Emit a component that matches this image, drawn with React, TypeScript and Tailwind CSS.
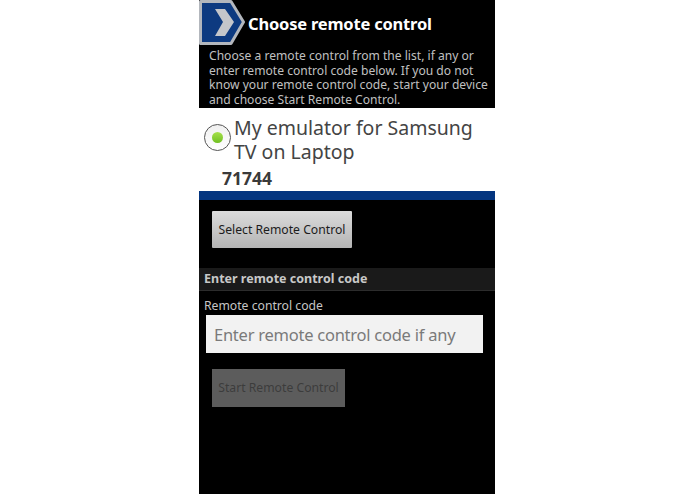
const FONT = "font-['Noto_Sans','Open_Sans',sans-serif]";

function Logo() {
  return (
    <svg width="46" height="45" viewBox="0 0 46 45" className="shrink-0">
      <path d="M1.5 1.5H32L44.5 22L32 43.5H1.5Z" fill="#0d3a80" stroke="#b3b7bd" strokeWidth="3" strokeLinejoin="round" />
      <path d="M16 9H26L35 22L26 36H16L24 22Z" fill="#c4c6ca" />
    </svg>
  );
}

export default function App() {
  return (
    <div className={`bg-white h-[494px] overflow-hidden pl-[199px] ${FONT}`}>
      <div className="w-[296px] h-full bg-black flex flex-col">
        {/* Header */}
        <div className="flex items-start h-[49px]">
          <Logo />
          <h1 className="ml-[3px] mt-[11px] text-[16.5px] leading-[26px] font-bold text-white tracking-[-0.2px] whitespace-nowrap">
            Choose remote control
          </h1>
        </div>
        <p className="h-[59px] pl-[10px] text-[12.1px] leading-[14.5px] text-[#c0c0c0] whitespace-nowrap">
          Choose a remote control from the list, if any or
          <br />
          enter remote control code below. If you do not
          <br />
          know your remote control code, start your device
          <br />
          and choose Start Remote Control.
        </p>

        {/* Remote list */}
        <div className="h-[83px] bg-white flex flex-col">
          <div className="flex items-start">
            <div className="ml-[5px] mt-[16px] w-[27px] h-[27px] rounded-full border border-[#555] bg-gradient-to-b from-[#f0f0f0] to-white flex items-center justify-center shrink-0">
              <div className="w-[11px] h-[11px] rounded-full bg-gradient-to-b from-[#a6e04a] to-[#6fc020]" />
            </div>
            <div className="ml-[3px] mt-[8px] text-[19.5px] leading-[24px] text-[#444]">
              My emulator for Samsung
              <br />
              TV on Laptop
            </div>
          </div>
          <div className="ml-[23px] mt-[2px] text-[17.5px] leading-[24px] font-bold text-[#3a3a3a]">71744</div>
        </div>
        <div className="h-[9px] bg-[#04357f]" />

        {/* Select button */}
        <div className="mt-[11px] ml-[13px] w-[140px] h-[37px] pt-[2px] rounded-[1px] bg-gradient-to-b from-[#dcdcdc] to-[#b4b4b4] flex items-center justify-center text-[12.2px] text-[#1c1c1c] whitespace-nowrap">
          Select Remote Control
        </div>

        {/* Code entry */}
        <div className="mt-[20px] h-[23px] bg-[#1a1a1a] border-b border-[#2c2c2c] pl-[5px] flex items-center text-[12.5px] font-bold text-[#c8c8c8] whitespace-nowrap">
          Enter remote control code
        </div>
        <div className="mt-[6px] pl-[5px] text-[12.2px] leading-[18px] text-[#c6c6c6]">Remote control code</div>
        <div className="ml-[7px] w-[277px] h-[38px] pt-[2px] bg-[#f2f2f2] pl-[8px] flex items-center text-[16.5px] text-[#7a7a7a] tracking-[-0.25px] whitespace-nowrap">
          Enter remote control code if any
        </div>
        <div className="mt-[16px] ml-[13px] w-[133px] h-[38px] bg-[#5c5c5c] flex items-center justify-center text-[12.2px] text-[#3c3c3c] whitespace-nowrap">
          Start Remote Control
        </div>
      </div>
    </div>
  );
}
